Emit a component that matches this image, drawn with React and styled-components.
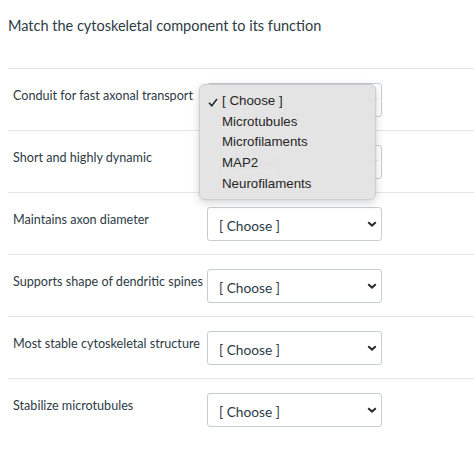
import React from "react";
import styled, { createGlobalStyle } from "styled-components";

const Global = createGlobalStyle`
  html, body { margin: 0; padding: 0; background: #fff; }
  body { font-family: Lato, "Noto Sans", sans-serif; color: #2d3b45; }
`;

const Page = styled.div`
  padding-left: 8px;
  width: 466px;
  overflow: hidden;
`;

const Title = styled.div`
  font-size: 14.5px;
  line-height: 20px;
  padding-top: 16px;
  height: 68px;
  box-sizing: border-box;
  color: #2d3b45;
`;

const List = styled.div`
  border-top: 1px solid #e3e5e6;
`;

const Row = styled.div`
  display: flex;
  align-items: flex-start;
  padding: 14px 0 13px;
  border-bottom: ${(p) => (p.$last ? "none" : "1px solid #e3e5e6")};
`;

const Label = styled.div`
  width: 199px;
  box-sizing: border-box;
  padding-left: 5px;
  padding-top: 5px;
  font-size: 12.6px;
  line-height: 16px;
  white-space: nowrap;
  color: #2d3b45;
`;

const SelectWrap = styled.div`
  position: relative;
  width: 175px;
  height: 34px;
  box-sizing: border-box;
  border: 1px solid #c7cdd1;
  border-radius: 3px;
  background: #fff;
  display: flex;
  align-items: center;
  justify-content: space-between;
  padding: 0 4px 0 11px;
  font-size: 13.7px;
  color: #2d3b45;
`;

const SelText = styled.span`
  padding-top: 2px;
`;

const Menu = styled.div`
  position: absolute;
  left: -9px;
  top: 0px;
  width: 177px;
  box-sizing: border-box;
  padding: 6px 0 5px;
  background: rgba(227, 227, 227, 0.98);
  border: 1px solid #cecece;
  border-radius: 6px;
  box-shadow: 0 3px 10px rgba(0, 0, 0, 0.16), 0 0 1px rgba(0, 0, 0, 0.2);
  font-family: "Liberation Sans", Arial, sans-serif;
  font-size: 13.3px;
  color: #262626;
  z-index: 10;
`;

const Item = styled.div`
  position: relative;
  height: 20.7px;
  line-height: 20.7px;
  padding-left: 22px;
`;

const CheckMark = styled.svg`
  position: absolute;
  left: 8px;
  top: 7px;
`;

const Check = () => (
  <CheckMark width="10" height="9" viewBox="0 0 10 9">
    <path d="M1 4.8 L3.8 7.8 L9 1" fill="none" stroke="#262626" strokeWidth="1.5" />
  </CheckMark>
);

const Chevron = () => (
  <svg width="10" height="6" viewBox="0 0 10 6">
    <path d="M1.2 1.2 L5 4.6 L8.8 1.2" fill="none" stroke="#2b2b2b" strokeWidth="2" />
  </svg>
);

const rows = [
  "Conduit for fast axonal transport",
  "Short and highly dynamic",
  "Maintains axon diameter",
  "Supports shape of dendritic spines",
  "Most stable cytoskeletal structure",
  "Stabilize microtubules",
];

const options = ["[ Choose ]", "Microtubules", "Microfilaments", "MAP2", "Neurofilaments"];

export default function App() {
  return (
    <>
      <Global />
      <Page>
        <Title>Match the cytoskeletal component to its function</Title>
        <List>
          {rows.map((r, i) => (
            <Row key={r} $last={i === rows.length - 1}>
              <Label>{r}</Label>
              <SelectWrap>
                <SelText>[ Choose ]</SelText>
                <Chevron />
                {i === 0 && (
                  <Menu>
                    {options.map((o, j) => (
                      <Item key={o}>
                        {j === 0 && <Check />}
                        {o}
                      </Item>
                    ))}
                  </Menu>
                )}
              </SelectWrap>
            </Row>
          ))}
        </List>
      </Page>
    </>
  );
}
